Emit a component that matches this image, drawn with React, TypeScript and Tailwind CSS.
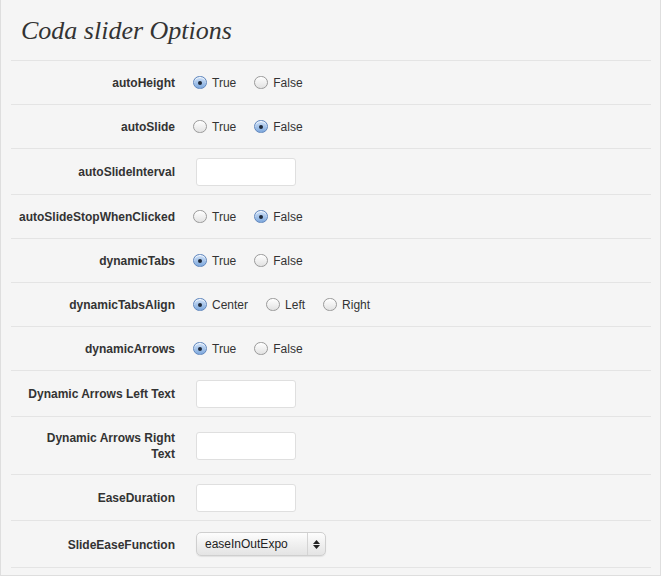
import React from "react";

type Row =
  | { label: React.ReactNode; kind: "radio"; options: string[]; checked: number; h: string }
  | { label: React.ReactNode; kind: "text"; h: string }
  | { label: React.ReactNode; kind: "select"; value: string; h: string };

const rows: Row[] = [
  { label: "autoHeight", kind: "radio", options: ["True", "False"], checked: 0, h: "h-[44px]" },
  { label: "autoSlide", kind: "radio", options: ["True", "False"], checked: 1, h: "h-[44px]" },
  { label: "autoSlideInterval", kind: "text", h: "h-[46px]" },
  { label: "autoSlideStopWhenClicked", kind: "radio", options: ["True", "False"], checked: 1, h: "h-[44px]" },
  { label: "dynamicTabs", kind: "radio", options: ["True", "False"], checked: 0, h: "h-[44px]" },
  { label: "dynamicTabsAlign", kind: "radio", options: ["Center", "Left", "Right"], checked: 0, h: "h-[44px]" },
  { label: "dynamicArrows", kind: "radio", options: ["True", "False"], checked: 0, h: "h-[44px]" },
  { label: "Dynamic Arrows Left Text", kind: "text", h: "h-[46px]" },
  {
    label: (
      <>
        Dynamic Arrows Right
        <br />
        Text
      </>
    ),
    kind: "text",
    h: "h-[58px]",
  },
  { label: "EaseDuration", kind: "text", h: "h-[46px]" },
  { label: "SlideEaseFunction", kind: "select", value: "easeInOutExpo", h: "h-[47px]" },
];

function Radio({ on }: { on: boolean }) {
  if (on) {
    return (
      <span className="w-[14px] h-[13px] rounded-full border border-[#5f86bd] bg-gradient-to-b from-[#cfe1f7] to-[#7fa9dd] flex items-center justify-center shadow-[inset_0_1px_1px_rgba(255,255,255,0.8)]">
        <span className="w-[4px] h-[4px] rounded-full bg-[#1f2a3a]" />
      </span>
    );
  }
  return (
    <span className="w-[14px] h-[13px] rounded-full border border-[#9a9a9a] bg-gradient-to-b from-[#ffffff] to-[#e2e2e2]" />
  );
}

function Control({ row }: { row: Row }) {
  if (row.kind === "radio") {
    return (
      <div className="flex items-center gap-[18px] pl-[18px]">
        {row.options.map((o, i) => (
          <label key={o} className="flex items-center gap-[5px] text-[12px] text-[#333]">
            <Radio on={i === row.checked} />
            <span className="pt-[1px]">{o}</span>
          </label>
        ))}
      </div>
    );
  }
  if (row.kind === "text") {
    return (
      <div className="pl-[21px]">
        <div className="w-[100px] h-[28px] bg-white border border-[#dfdfdf] rounded-[3px]" />
      </div>
    );
  }
  return (
    <div className="pl-[21px]">
      <div className="w-[130px] h-[24px] flex items-stretch rounded-[5px] border border-[#cfcfcf] bg-gradient-to-b from-[#fdfdfd] via-[#f0f0f0] to-[#e4e4e4] shadow-[0_1px_1px_rgba(0,0,0,0.08)]">
        <span className="flex-1 flex items-center pl-[8px] text-[12px] text-[#222]">{row.value}</span>
        <span className="w-[18px] border-l border-[#d4d4d4] flex flex-col items-center justify-center gap-[1px]">
          <svg width="7" height="4" viewBox="0 0 7 4">
            <path d="M3.5 0 L7 4 L0 4 Z" fill="#222" />
          </svg>
          <svg width="7" height="4" viewBox="0 0 7 4">
            <path d="M0 0 L7 0 L3.5 4 Z" fill="#222" />
          </svg>
        </span>
      </div>
    </div>
  );
}

export default function App() {
  return (
    <div className="w-[662px] h-[577px] bg-white font-['Liberation_Sans',Arial,sans-serif]">
      <div className="w-[661px] h-[576px] bg-[#f5f5f5] border-l border-r border-b border-[#dedede] pl-[10px] pr-[9px]">
        <div className="h-[60px] flex items-center pl-[10px] pt-[1px]">
          <h2 className="font-['Liberation_Serif',Georgia,serif] italic text-[26px] text-[#333] leading-none">
            Coda slider Options
          </h2>
        </div>
        <div className="border-t border-[#e4e4e4]">
          {rows.map((row, i) => (
            <div key={i} className={`${row.h} flex items-center border-b border-[#e4e4e4]`}>
              <div className="w-[164px] shrink-0 text-right text-[12px] font-bold text-[#333] leading-[16px] pt-[1px]">
                {row.label}
              </div>
              <Control row={row} />
            </div>
          ))}
        </div>
      </div>
    </div>
  );
}
